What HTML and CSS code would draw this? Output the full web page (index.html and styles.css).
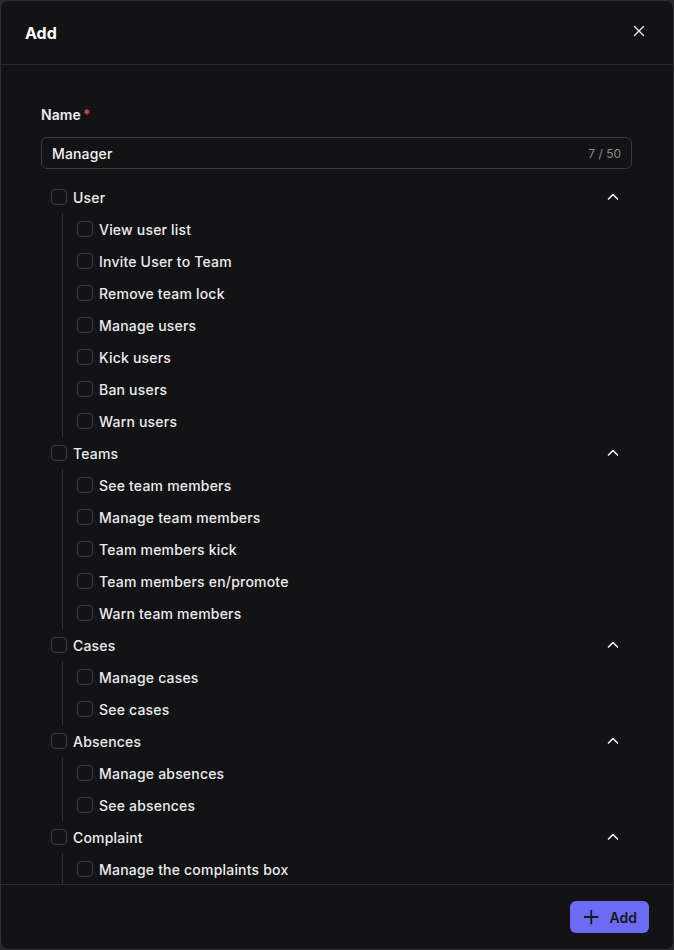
FILE: index.html
```html
<!DOCTYPE html>
<html>
<head>
<meta charset="utf-8">
<link rel="stylesheet" href="styles.css">
</head>
<body>
<div class="modal">
  <div class="header">
    <div class="title">Add</div>
    <button class="close" aria-label="Close">
      <svg width="12" height="12" viewBox="0 0 12 12"><path d="M1.5 1.5L10.5 10.5M10.5 1.5L1.5 10.5" stroke="#e8e8ea" stroke-width="1.4" stroke-linecap="round"/></svg>
    </button>
  </div>
  <div class="body">
    <div class="label">Name<span class="req">*</span></div>
    <div class="input">
      <span class="value">Manager</span>
      <span class="count">7 / 50</span>
    </div>
    <div class="tree">
      <div class="group">
        <div class="row"><span class="cb"></span><span class="text">User</span><svg class="chev" width="14" height="14" viewBox="0 0 14 14"><path d="M2.5 9L7 4.5L11.5 9" fill="none" stroke="#f0f0f2" stroke-width="1.6" stroke-linecap="round" stroke-linejoin="round"/></svg></div>
        <div class="children">
          <div class="row"><span class="cb"></span><span class="text">View user list</span></div>
          <div class="row"><span class="cb"></span><span class="text">Invite User to Team</span></div>
          <div class="row"><span class="cb"></span><span class="text">Remove team lock</span></div>
          <div class="row"><span class="cb"></span><span class="text">Manage users</span></div>
          <div class="row"><span class="cb"></span><span class="text">Kick users</span></div>
          <div class="row"><span class="cb"></span><span class="text">Ban users</span></div>
          <div class="row"><span class="cb"></span><span class="text">Warn users</span></div>
        </div>
      </div>
      <div class="group">
        <div class="row"><span class="cb"></span><span class="text">Teams</span><svg class="chev" width="14" height="14" viewBox="0 0 14 14"><path d="M2.5 9L7 4.5L11.5 9" fill="none" stroke="#f0f0f2" stroke-width="1.6" stroke-linecap="round" stroke-linejoin="round"/></svg></div>
        <div class="children">
          <div class="row"><span class="cb"></span><span class="text">See team members</span></div>
          <div class="row"><span class="cb"></span><span class="text">Manage team members</span></div>
          <div class="row"><span class="cb"></span><span class="text">Team members kick</span></div>
          <div class="row"><span class="cb"></span><span class="text">Team members en/promote</span></div>
          <div class="row"><span class="cb"></span><span class="text">Warn team members</span></div>
        </div>
      </div>
      <div class="group">
        <div class="row"><span class="cb"></span><span class="text">Cases</span><svg class="chev" width="14" height="14" viewBox="0 0 14 14"><path d="M2.5 9L7 4.5L11.5 9" fill="none" stroke="#f0f0f2" stroke-width="1.6" stroke-linecap="round" stroke-linejoin="round"/></svg></div>
        <div class="children">
          <div class="row"><span class="cb"></span><span class="text">Manage cases</span></div>
          <div class="row"><span class="cb"></span><span class="text">See cases</span></div>
        </div>
      </div>
      <div class="group">
        <div class="row"><span class="cb"></span><span class="text">Absences</span><svg class="chev" width="14" height="14" viewBox="0 0 14 14"><path d="M2.5 9L7 4.5L11.5 9" fill="none" stroke="#f0f0f2" stroke-width="1.6" stroke-linecap="round" stroke-linejoin="round"/></svg></div>
        <div class="children">
          <div class="row"><span class="cb"></span><span class="text">Manage absences</span></div>
          <div class="row"><span class="cb"></span><span class="text">See absences</span></div>
        </div>
      </div>
      <div class="group">
        <div class="row"><span class="cb"></span><span class="text">Complaint</span><svg class="chev" width="14" height="14" viewBox="0 0 14 14"><path d="M2.5 9L7 4.5L11.5 9" fill="none" stroke="#f0f0f2" stroke-width="1.6" stroke-linecap="round" stroke-linejoin="round"/></svg></div>
        <div class="children tail">
          <div class="row"><span class="cb"></span><span class="text">Manage the complaints box</span></div>
        </div>
      </div>
    </div>
  </div>
  <div class="footer">
    <button class="add">
      <svg width="18" height="18" viewBox="0 0 18 18"><path d="M9 2V16M2 9H16" stroke="#17171a" stroke-width="2" stroke-linecap="round"/></svg>
      <span>Add</span>
    </button>
  </div>
</div>
</body>
</html>
```

FILE: styles.css
```css
* { box-sizing: border-box; }
html, body {
  margin: 0;
  padding: 0;
  background: #2a2a2d;
  height: 950px;
  overflow: hidden;
}
body {
  font-family: "Inter", "Noto Sans", sans-serif;
  color: #ececef;
}
.modal {
  width: 674px;
  height: 950px;
  background: #131315;
  border: 1px solid #303034;
  border-radius: 8px;
  display: flex;
  flex-direction: column;
  overflow: hidden;
}
.header {
  height: 64px;
  flex: none;
  display: flex;
  align-items: flex-start;
  justify-content: space-between;
  padding: 22px 27px 0 24px;
  border-bottom: 1px solid #2c2c30;
}
.title {
  font-size: 16px;
  font-weight: 700;
  color: #ffffff;
  line-height: 20px;
}
.close {
  background: none;
  border: none;
  padding: 0;
  margin-top: 1px;
  width: 14px;
  height: 14px;
  display: flex;
  align-items: center;
  justify-content: center;
  cursor: pointer;
}
.body {
  flex: 1;
  overflow: hidden;
  padding: 41px 41px 0 40px;
}
.label {
  font-size: 14px;
  font-weight: 600;
  color: #ececef;
  line-height: 18px;
  letter-spacing: 0.1px;
}
.req {
  color: #e5484d;
  margin-left: 2px;
}
.input {
  margin-top: 13px;
  height: 32px;
  border: 1px solid #3a3a3f;
  border-radius: 6px;
  display: flex;
  align-items: center;
  justify-content: space-between;
  padding: 0 10px 0 10px;
  background: #131315;
}
.value {
  font-size: 14px;
  font-weight: 500;
  color: #f2f2f4;
  letter-spacing: 0.15px;
}
.count {
  font-size: 12px;
  color: #8a8a93;
}
.tree {
  margin-top: 12px;
  padding-left: 10px;
  padding-right: 10px;
}
.row {
  height: 32px;
  display: flex;
  align-items: center;
  gap: 6px;
}
.cb {
  width: 16px;
  height: 16px;
  border: 1px solid #3a3a3f;
  border-radius: 4px;
  flex: none;
}
.text {
  font-size: 14px;
  font-weight: 500;
  color: #ececef;
  flex: 1;
  letter-spacing: 0.2px;
}
.chev {
  flex: none;
  margin-right: 2px;
}
.children {
  margin-left: 11px;
  border-left: 1px solid #303034;
  padding-left: 14px;
}
.children.tail {
  padding-bottom: 32px;
}
.footer {
  height: 65px;
  flex: none;
  border-top: 1px solid #2c2c30;
  display: flex;
  justify-content: flex-end;
  align-items: flex-start;
  padding: 16px 24px 0 0;
}
.add {
  height: 32px;
  width: 79px;
  background: #6b6cf3;
  border: none;
  border-radius: 6px;
  display: flex;
  align-items: center;
  justify-content: center;
  gap: 10px;
  padding: 0 12px 0 13px;
  font-family: inherit;
  font-size: 14px;
  font-weight: 600;
  color: #17171a;
  cursor: pointer;
}
```
